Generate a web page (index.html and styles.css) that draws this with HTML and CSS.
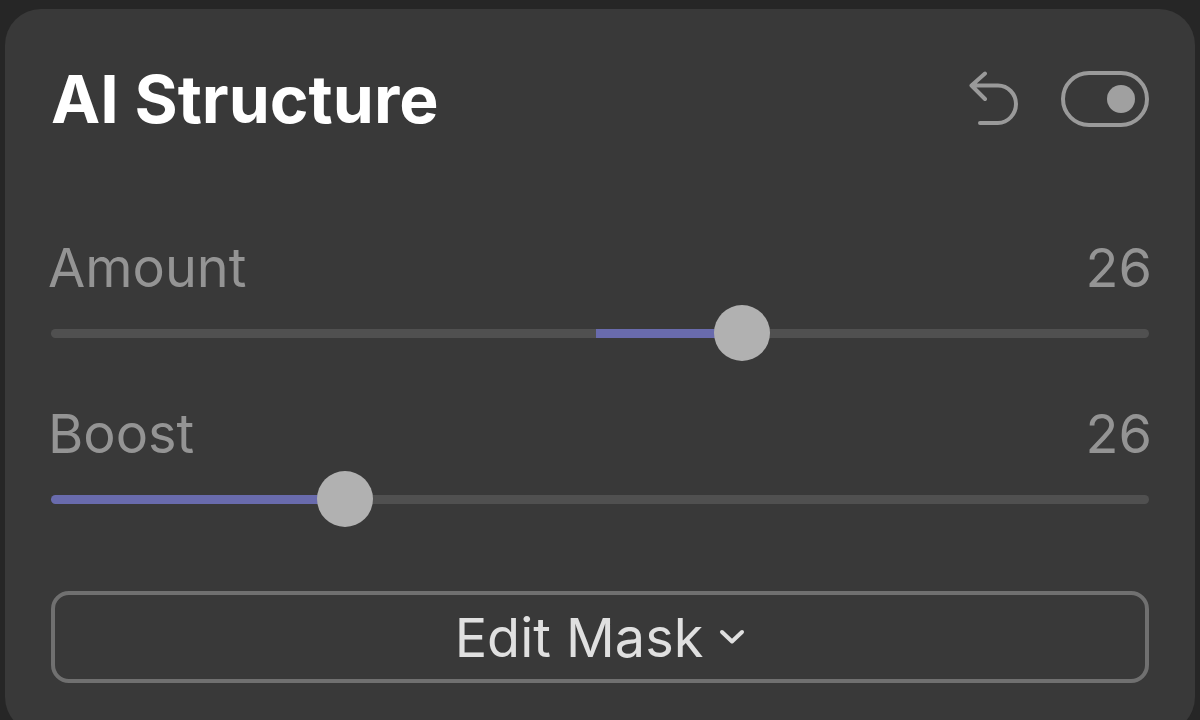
FILE: index.html
```html
<!DOCTYPE html>
<html lang="en">
<head>
<meta charset="utf-8">
<meta name="viewport" content="width=device-width, initial-scale=1">
<title>AI Structure</title>
<link rel="stylesheet" href="styles.css">
</head>
<body>
<main class="panel">
  <header class="panel-header">
    <h1 class="title">AI Structure</h1>
    <div class="actions">
      <button class="undo" type="button" aria-label="Reset">
        <svg width="52" height="56" viewBox="0 0 52 56" fill="none" stroke="currentColor" stroke-width="4" stroke-linecap="round" stroke-linejoin="round"><path d="M18 2.500 4.500 14.500 18 28M4.500 14.500H31C41 14.500 49 23 49 33S41 52 31 52H13"/></svg>
      </button>
      <input class="switch" type="checkbox" role="switch" aria-label="Enable AI Structure" checked>
    </div>
  </header>
  <div class="control">
    <div class="control-row">
      <label for="amount">Amount</label>
      <output for="amount">26</output>
    </div>
    <input class="slider slider-centered" id="amount" type="range" min="-100" max="98" value="26">
  </div>
  <div class="control">
    <div class="control-row">
      <label for="boost">Boost</label>
      <output for="boost">26</output>
    </div>
    <input class="slider slider-start" id="boost" type="range" min="0" max="102" value="26">
  </div>
  <button class="mask-button" type="button">
    Edit Mask
    <svg width="26" height="16" viewBox="0 0 26 16" fill="none" stroke="currentColor" stroke-width="4" stroke-linecap="round" stroke-linejoin="round"><path d="m3 3 10 9.500L23 3"/></svg>
  </button>
</main>
</body>
</html>
```
FILE: styles.css
```css
* { box-sizing: border-box; }

html { background: #262626; }

body {
  margin: 0;
  height: 100vh;
  overflow: hidden;
  font-family: Inter, "Liberation Sans", sans-serif;
  font-weight: 400;
}

.panel {
  margin: 9px 5px 0;
  padding: 50px 46px 50px;
  border-radius: 36px;
  background: #393939;
}

.panel-header {
  display: flex;
  align-items: center;
  justify-content: space-between;
  height: 80px;
  margin-bottom: 92px;
}

.title {
  margin: 0;
  color: #fff;
  font-size: 66px;
  font-weight: 700;
  line-height: 80px;
}

.actions {
  display: flex;
  align-items: center;
  gap: 42px;
}

.undo {
  padding: 0;
  border: 0;
  background: none;
  color: #9a9a9a;
}

.undo svg { display: block; }

.switch {
  appearance: none;
  display: flex;
  align-items: center;
  justify-content: flex-end;
  width: 88px;
  height: 56px;
  margin: 0;
  padding: 0 10px;
  border: 4px solid #9a9a9a;
  border-radius: 28px;
}

.switch::before {
  content: "";
  width: 28px;
  height: 28px;
  border-radius: 50%;
  background: #a0a0a0;
}

.switch:not(:checked) { justify-content: flex-start; }

.control { margin-bottom: 36px; }

.control-row {
  display: flex;
  justify-content: space-between;
  height: 74px;
  margin: 0 -3px;
  color: #949494;
  font-size: 54px;
  line-height: 74px;
}

.slider {
  appearance: none;
  display: block;
  width: 100%;
  height: 56px;
  margin: 0;
  background: none;
}

.slider::-webkit-slider-runnable-track {
  height: 9px;
  border-radius: 5px;
  background: #505050;
}

.slider-centered::-webkit-slider-runnable-track {
  background: linear-gradient(to right, #505050 49.6%, #696bad 49.6% 63%, #505050 63%);
}

.slider-start::-webkit-slider-runnable-track {
  background: linear-gradient(to right, #696bad 27%, #505050 27%);
}

.slider::-webkit-slider-thumb {
  appearance: none;
  width: 56px;
  height: 56px;
  margin-top: -24px;
  border-radius: 50%;
  background: #b1b1b1;
}

.mask-button {
  display: flex;
  align-items: center;
  justify-content: center;
  gap: 16px;
  width: 100%;
  height: 92px;
  margin-top: 64px;
  padding: 0;
  border: 4px solid #707070;
  border-radius: 18px;
  background: none;
  color: #e0e0e0;
  font: inherit;
  font-size: 54px;
}
```
